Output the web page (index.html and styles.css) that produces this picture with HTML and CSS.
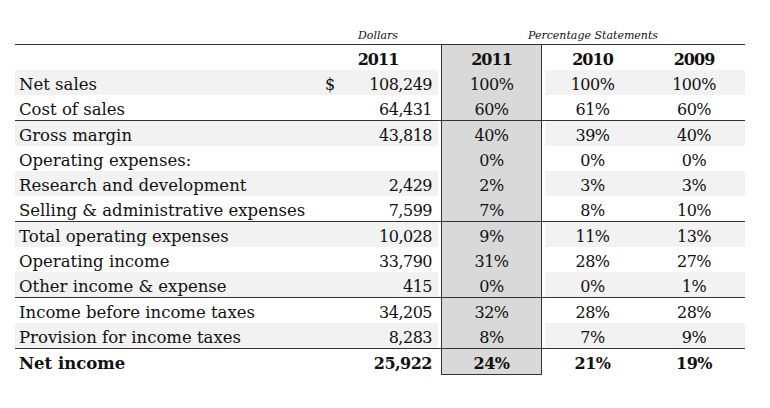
FILE: index.html
```html
<!DOCTYPE html>
<html lang="en">
<head>
<meta charset="utf-8">
<title>Income Statement</title>
<link rel="stylesheet" href="styles.css">
</head>
<body>
<div class="sheet">
<table class="stmt">
  <colgroup>
    <col class="c-label"><col class="c-dol"><col class="c-p11"><col class="c-p10"><col class="c-p09">
  </colgroup>
  <thead>
    <tr class="cap">
      <td></td>
      <td class="captxt">Dollars</td>
      <td class="captxt" colspan="3">Percentage Statements</td>
    </tr>
    <tr class="head">
      <td class="label"></td>
      <td class="dol ctr">2011</td>
      <td class="p11">2011</td>
      <td class="p10">2010</td>
      <td class="p09">2009</td>
    </tr>
  </thead>
  <tbody>
    <tr class="stripe">
      <td class="label">Net sales</td>
      <td class="dol"><span class="cur">$</span><span class="num">108,249</span></td>
      <td class="p11">100%</td><td class="p10">100%</td><td class="p09">100%</td>
    </tr>
    <tr>
      <td class="label">Cost of sales</td>
      <td class="dol"><span class="num">64,431</span></td>
      <td class="p11">60%</td><td class="p10">61%</td><td class="p09">60%</td>
    </tr>
    <tr class="stripe rule">
      <td class="label">Gross margin</td>
      <td class="dol"><span class="num">43,818</span></td>
      <td class="p11">40%</td><td class="p10">39%</td><td class="p09">40%</td>
    </tr>
    <tr>
      <td class="label">Operating expenses:</td>
      <td class="dol"></td>
      <td class="p11">0%</td><td class="p10">0%</td><td class="p09">0%</td>
    </tr>
    <tr class="stripe">
      <td class="label">Research and development</td>
      <td class="dol"><span class="num">2,429</span></td>
      <td class="p11">2%</td><td class="p10">3%</td><td class="p09">3%</td>
    </tr>
    <tr>
      <td class="label">Selling &amp; administrative expenses</td>
      <td class="dol"><span class="num">7,599</span></td>
      <td class="p11">7%</td><td class="p10">8%</td><td class="p09">10%</td>
    </tr>
    <tr class="stripe rule">
      <td class="label">Total operating expenses</td>
      <td class="dol"><span class="num">10,028</span></td>
      <td class="p11">9%</td><td class="p10">11%</td><td class="p09">13%</td>
    </tr>
    <tr>
      <td class="label">Operating income</td>
      <td class="dol"><span class="num">33,790</span></td>
      <td class="p11">31%</td><td class="p10">28%</td><td class="p09">27%</td>
    </tr>
    <tr class="stripe">
      <td class="label">Other income &amp; expense</td>
      <td class="dol"><span class="num">415</span></td>
      <td class="p11">0%</td><td class="p10">0%</td><td class="p09">1%</td>
    </tr>
    <tr class="rule">
      <td class="label">Income before income taxes</td>
      <td class="dol"><span class="num">34,205</span></td>
      <td class="p11">32%</td><td class="p10">28%</td><td class="p09">28%</td>
    </tr>
    <tr class="stripe">
      <td class="label">Provision for income taxes</td>
      <td class="dol"><span class="num">8,283</span></td>
      <td class="p11">8%</td><td class="p10">7%</td><td class="p09">9%</td>
    </tr>
    <tr class="rule total">
      <td class="label">Net income</td>
      <td class="dol"><span class="num">25,922</span></td>
      <td class="p11">24%</td><td class="p10">21%</td><td class="p09">19%</td>
    </tr>
  </tbody>
</table>
</div>
</body>
</html>
```

FILE: styles.css
```css
html, body {
  margin: 0;
  padding: 0;
  background: #ffffff;
}

.sheet {
  padding: 26px 0 0 15px;
}

.stmt {
  border-collapse: separate;
  border-spacing: 0;
  table-layout: fixed;
  width: 730px;
  font-family: "DejaVu Serif", "Liberation Serif", serif;
  font-size: 16.5px;
  color: #111111;
}

.c-label { width: 300px; }
.c-dol { width: 126px; }
.c-p11 { width: 101px; }
.c-p10 { width: 101px; }
.c-p09 { width: 102px; }

.stmt td {
  padding: 4px 0 0 0;
  height: 21px;
  line-height: 21px;
  white-space: nowrap;
  vertical-align: top;
}

/* caption row with italic group labels */
.stmt .cap td {
  height: 14px;
  line-height: 14px;
  padding: 3px 0 1px 0;
}
.captxt {
  font-style: italic;
  font-size: 11px;
  text-align: center;
}

/* header row */
.head td {
  border-top: 1px solid #333333;
  font-weight: bold;
  text-align: center;
}

.label {
  padding-left: 4px !important;
  text-align: left;
}

.dol,
.p11, .p10, .p09 {
  font-size: 16px;
  letter-spacing: -0.5px;
}
.head .dol,
.head .p11, .head .p10, .head .p09 {
  letter-spacing: -1px;
}

.dol {
  text-align: right;
}
.dol .cur {
  float: left;
  padding-left: 10px;
}
.dol .num {
  padding-right: 9px;
}
.head .dol {
  text-align: center;
}

.p11, .p10, .p09 {
  text-align: center;
}

.stmt .p11 {
  background: #d9d9d9;
  border-left: 1px solid #333333;
  border-right: 1px solid #333333;
}

.stripe .label,
.stripe .p09 {
  background: #f2f2f2;
}
.stripe .dol {
  background: linear-gradient(90deg, #f2f2f2 calc(100% - 3px), transparent 0);
}
.stripe .p10 {
  background: linear-gradient(90deg, transparent 3px, #f2f2f2 0);
}

.rule td {
  border-top: 1px solid #333333;
}

.total td {
  font-weight: bold;
}
.stmt .total .p11 {
  border-bottom: 1px solid #333333;
}
```
